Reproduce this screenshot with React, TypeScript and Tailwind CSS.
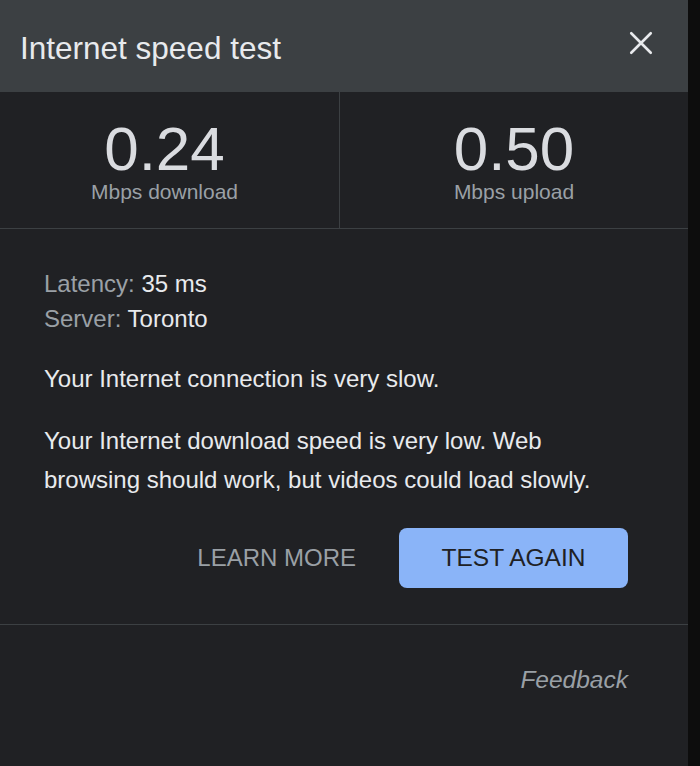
import React from 'react';

const font = { fontFamily: '"Liberation Sans", Arial, sans-serif' };

export default function App() {
  return (
    <div className="w-[700px] h-[766px] flex bg-[#0d0d0d]" style={font}>
      <div className="w-[688px] h-full bg-[#202124] flex flex-col">
        {/* Header */}
        <div className="h-[92px] bg-[#3c4043] flex items-center justify-between pl-[20px] pr-[33px]">
          <h1 className="text-[31.5px] leading-none text-[#e8eaed] pt-[6px]">Internet speed test</h1>
          <button className="w-[28px] h-[28px] flex items-center justify-center mb-[6px]">
            <svg width="26" height="26" viewBox="0 0 24 24" fill="none" stroke="#e8eaed" strokeWidth="2.4" strokeLinecap="round">
              <path d="M3 3L21 21M21 3L3 21" />
            </svg>
          </button>
        </div>

        {/* Results */}
        <div className="grid grid-cols-[340px_1fr] h-[137px] border-b border-[#3c4043]">
          <div className="border-r border-[#3c4043] flex flex-col items-center justify-center pr-[10px] pt-[4px]">
            <span className="text-[62px] leading-[58px] text-[#dadce0]">0.24</span>
            <span className="text-[21px] leading-[24px] mt-[2px] text-[#9aa0a6]">Mbps download</span>
          </div>
          <div className="flex flex-col items-center justify-center pt-[4px]">
            <span className="text-[62px] leading-[58px] text-[#dadce0]">0.50</span>
            <span className="text-[21px] leading-[24px] mt-[2px] text-[#9aa0a6]">Mbps upload</span>
          </div>
        </div>

        {/* Details */}
        <div className="pl-[44px] pr-[60px] pt-[37px] pb-[36px] border-b border-[#3c4043]">
          <div className="text-[24px] leading-[35px]">
            <div><span className="text-[#9aa0a6]">Latency: </span><span className="text-[#e8eaed]">35 ms</span></div>
            <div><span className="text-[#9aa0a6]">Server: </span><span className="text-[#e8eaed]">Toronto</span></div>
          </div>
          <p className="mt-[23px] text-[24px] leading-[40px] text-[#e8eaed]">Your Internet connection is very slow.</p>
          <p className="mt-[22px] text-[24px] leading-[39px] text-[#e8eaed]">
            Your Internet download speed is very low. Web browsing should work, but videos could load slowly.
          </p>
          <div className="mt-[29px] flex items-center justify-end gap-[43px]">
            <button className="text-[24px] text-[#9aa0a6]">LEARN MORE</button>
            <button className="w-[229px] h-[60px] rounded-[8px] bg-[#8ab4f8] text-[24.5px] text-[#202124]">TEST AGAIN</button>
          </div>
        </div>

        {/* Footer */}
        <div className="flex justify-end pr-[60px] pt-[40px]">
          <span className="text-[24.5px] leading-[30px] italic text-[#9aa0a6]">Feedback</span>
        </div>
      </div>
    </div>
  );
}
